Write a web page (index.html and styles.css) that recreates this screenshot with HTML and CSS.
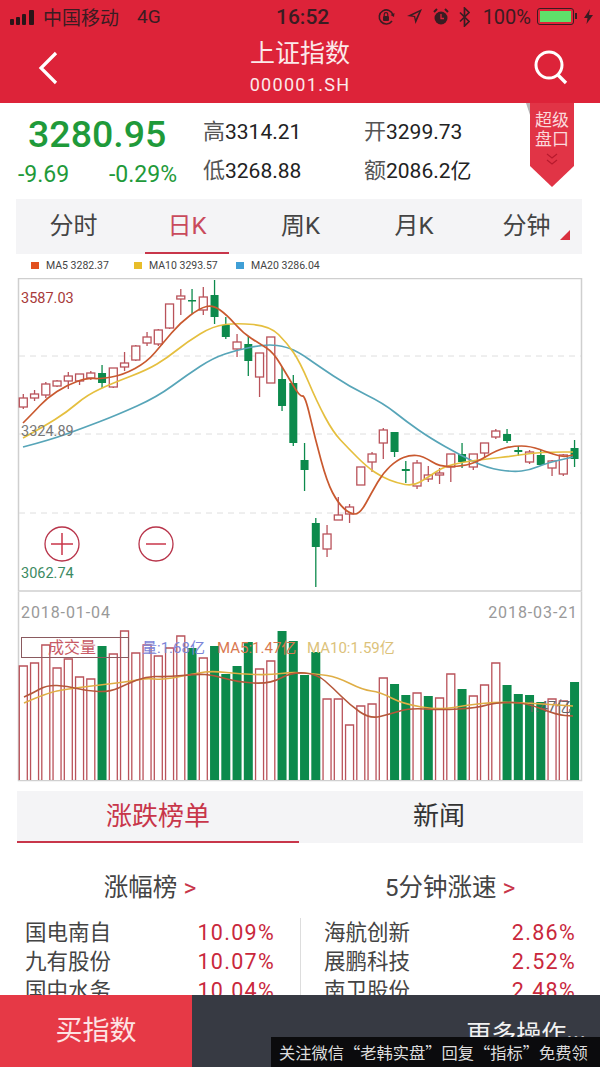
FILE: index.html
```html
<!DOCTYPE html>
<html lang="zh-CN">
<head>
    <meta charset="UTF-8">
    <meta name="viewport" content="width=device-width, initial-scale=1.0">
    <title>上证指数</title>
    <link rel="stylesheet" href="styles.css">
</head>
<body>
    <div class="page">
        <!-- Red header -->
        <header class="top">
            <div class="status">
                <svg class="signal" width="27" height="16" viewBox="0 0 27 16"><rect x="0" y="10" width="4" height="6" rx="1"/><rect x="6" y="8" width="4" height="8" rx="1"/><rect x="12" y="5" width="4" height="11" rx="1"/><rect x="19" y="1" width="5" height="15" rx="1"/></svg>
                <span class="carrier">中国移动</span>
                <span class="net">4G</span>
                <span class="clock">16:52</span>
                <div class="status-right">
                    <svg width="19" height="18" viewBox="0 0 19 18"><path d="M15 13a7 7 0 1 1 1-6" fill="none" stroke="#3a1c22" stroke-width="1.6"/><path d="M17.5 5l-.5 4-3.5-2z" fill="#3a1c22"/><rect x="6" y="8" width="6" height="5" rx="1" fill="#3a1c22"/><path d="M7.2 8V6.500a1.800 1.800 0 0 1 3.600 0V8" fill="none" stroke="#3a1c22" stroke-width="1.200"/></svg>
                    <svg width="17" height="17" viewBox="0 0 17 17"><path d="M16 1L1 8l7 1 1.500 7z M13 4L6 7.600l3.200.500.500 3z" fill="#3a1c22" fill-rule="evenodd"/></svg>
                    <svg width="16" height="18" viewBox="0 0 16 18"><circle cx="8" cy="10" r="6.500" fill="#3a1c22"/><path d="M8 6v4.500h3" fill="none" stroke="#dd2339" stroke-width="1.300"/><path d="M1 4l3-3M15 4l-3-3" stroke="#3a1c22" stroke-width="2"/></svg>
                    <svg width="11" height="20" viewBox="0 0 11 20"><path d="M1 5.500l9 9-4.500 4.500V1l4.500 4.500-9 9" fill="none" stroke="#3a1c22" stroke-width="1.700"/></svg>
                    <span class="pct">100%</span>
                    <span class="battery"><i></i></span>
                    <svg width="9" height="15" viewBox="0 0 9 15"><path d="M6 0L0 9h3.500L2.500 15 9 6H5z" fill="#3a1c22"/></svg>
                </div>
            </div>
            <div class="nav">
                <svg class="back" width="20" height="34" viewBox="0 0 20 34"><path d="M18 2L3 17l15 15" fill="none" stroke="#fff" stroke-width="3.200"/></svg>
                <div class="title">
                    <h1>上证指数</h1>
                    <p>000001.SH</p>
                </div>
                <svg class="search" width="36" height="36" viewBox="0 0 36 36"><circle cx="16" cy="15" r="13" fill="none" stroke="#fff" stroke-width="3"/><path d="M25 25l8 8" stroke="#fff" stroke-width="3.400"/></svg>
            </div>
        </header>

        <!-- Quote summary -->
        <section class="quote">
            <div class="price">
                <div class="now">3280.95</div>
                <div class="change"><span>-9.69</span><span>-0.29%</span></div>
            </div>
            <div class="stats">
                <div><b>高</b>3314.21</div>
                <div><b>开</b>3299.73</div>
                <div><b>低</b>3268.88</div>
                <div><b>额</b>2086.2亿</div>
            </div>
            <div class="ribbon">
                <span>超级<br>盘口</span>
                <svg width="14" height="14" viewBox="0 0 14 14"><path d="M2 1l5 4 5-4M2 7l5 4 5-4" fill="none" stroke="#b81a2d" stroke-width="1.200"/></svg>
            </div>
        </section>

        <nav class="periods">
            <span>分时</span>
            <span class="on">日K</span>
            <span>周K</span>
            <span>月K</span>
            <span class="more">分钟</span>
        </nav>

        <div class="legend">
            <span><i class="c5"></i>MA5 3282.37</span>
            <span><i class="c10"></i>MA10 3293.57</span>
            <span><i class="c20"></i>MA20 3286.04</span>
        </div>

        <!-- Charts, drawn by chart.js -->
        <svg id="kline" class="chart" width="600" height="314" viewBox="0 278 600 314">
            <text class="axis up" x="21" y="303">3587.03</text>
            <text class="axis mid" x="21" y="436">3324.89</text>
            <text class="axis down" x="21" y="578">3062.74</text>
            <g class="zoom-btn">
                <circle cx="62" cy="544" r="17"/>
                <path d="M51 544h22M62 533v22"/>
                <circle cx="156" cy="544" r="17"/>
                <path d="M146 544h20"/>
            </g>
        </svg>
        <svg id="volume" class="chart" width="600" height="190" viewBox="0 592 600 190">
            <text class="date" x="21" y="618">2018-01-04</text>
            <text class="date" x="578" y="618" text-anchor="end">2018-03-21</text>
            <rect class="vol-box" x="21.500" y="637.500" width="107" height="20"/>
            <text class="vol-label" x="48" y="653">成交量</text>
            <text class="vol-text blue" x="142" y="653">量:1.68亿</text>
            <text class="vol-text orange" x="217" y="653">MA5:1.47亿</text>
            <text class="vol-text yellow" x="307" y="653">MA10:1.59亿</text>
            <text class="vol-text gray" x="527" y="712">1.47亿</text>
        </svg>

        <nav class="lists">
            <span class="on">涨跌榜单</span>
            <span>新闻</span>
        </nav>

        <section class="ranks">
            <div class="rank">
                <h3>涨幅榜 <em>&gt;</em></h3>
                <ul>
                    <li><span>国电南自</span><strong>10.09%</strong></li>
                    <li><span>九有股份</span><strong>10.07%</strong></li>
                    <li><span>国中水务</span><strong>10.04%</strong></li>
                </ul>
            </div>
            <div class="rank">
                <h3>5分钟涨速 <em>&gt;</em></h3>
                <ul class="split">
                    <li><span>海航创新</span><strong>2.86%</strong></li>
                    <li><span>展鹏科技</span><strong>2.52%</strong></li>
                    <li><span>南卫股份</span><strong>2.48%</strong></li>
                </ul>
            </div>
        </section>

        <!-- Bottom bar sits over the list -->
        <footer class="actions">
            <div class="buy">买指数</div>
            <div class="others">更多操作<span class="dots">...</span></div>
        </footer>
        <div class="watermark">关注微信“老韩实盘”回复“指标”免费领</div>
    </div>
    <script src="chart.js"></script>
</body>
</html>
```
FILE: styles.css
```css
* {
    margin: 0;
    padding: 0;
    box-sizing: border-box;
}

body {
    background: #fff;
    font-family: Roboto, "Noto Sans CJK SC", sans-serif;
    color: #2b2b2b;
}

.page {
    position: relative;
    width: 600px;
    height: 1067px;
    overflow: hidden;
}

/* header */
.top {
    height: 103px;
    background: #dd2339;
}

.status {
    display: flex;
    align-items: center;
    height: 33px;
    padding: 0 7px 0 10px;
    color: #3a1c22;
    font-size: 19px;
}

.signal { fill: #2a1418; }

.carrier { margin-left: 6px; width: 94px; }

.net { width: 139px; }

.clock {
    font-size: 21px;
    font-weight: 500;
}

.status-right {
    display: flex;
    align-items: center;
    gap: 10px;
    margin-left: auto;
}

.pct { font-size: 20px; margin-left: 3px; }

.battery {
    position: relative;
    display: block;
    width: 37px;
    height: 17px;
    margin-left: -4px;
    padding: 2px;
    border: 1px solid #3a1c22;
    border-radius: 3px;
}

.battery::after {
    content: "";
    position: absolute;
    right: -4px;
    top: 4px;
    width: 2px;
    height: 6px;
    background: #3a1c22;
}

.battery i {
    display: block;
    height: 100%;
    background: #5fe06a;
}

.nav {
    display: grid;
    grid-template-columns: 1fr auto 1fr;
    align-items: center;
    height: 70px;
    padding: 0 31px;
}

.back { margin-left: 7px; }

.search { justify-self: end; }

.title { text-align: center; color: #fbe9ea; }

.title h1 { font-size: 25px; font-weight: 400; line-height: 32px; margin-top: 2px; }

.title p { font-size: 18px; line-height: 30px; letter-spacing: 1.300px; }

/* quote */
.quote {
    position: relative;
    display: flex;
    height: 96px;
    padding: 8px 0 0 18px;
}

.quote::before {
    content: "";
    position: absolute;
    left: 526px;
    top: 0;
    border-top: 12px solid #b9b3b5;
    border-left: 4px solid transparent;
}

.price { width: 185px; }

.now {
    font-size: 37.500px;
    line-height: 46px;
    padding-left: 10px;
    color: #1f9a3a;
    font-weight: 500;
}

.change {
    display: flex;
    justify-content: space-between;
    width: 159px;
    margin-top: 2px;
    font-size: 23px;
    line-height: 31px;
    color: #1f9a3a;
}

.stats {
    display: grid;
    grid-template-columns: 161px 150px;
    grid-auto-rows: 39px;
    align-items: center;
    margin-top: -2px;
    font-size: 21px;
    color: #222;
}

.stats b { font-weight: 400; color: #555; font-size: 22px; }

.ribbon {
    position: absolute;
    top: 0;
    left: 530px;
    width: 44px;
    height: 84px;
    padding-top: 8px;
    text-align: center;
    background: #e13446;
    clip-path: polygon(0 0, 100% 0, 100% 75%, 50% 100%, 0 75%);
    color: #fbd9dc;
    font-size: 17px;
    line-height: 19px;
}

.ribbon svg { display: block; margin: 4px auto 0; }

/* period tabs */
.periods {
    display: grid;
    grid-template-columns: 115px 113px 113px 114px 111px;
    align-items: center;
    width: 566px;
    height: 55px;
    margin-left: 16px;
    background: #f4f4f6;
    font-size: 24px;
    color: #444;
    text-align: center;
}

.periods span { line-height: 55px; height: 55px; }

.periods .on {
    color: #c94a5c;
    border-bottom: 2px solid #c8364a;
    margin: 0 15px 0 14px;
}

.periods .more { position: relative; }

.periods .more::after {
    content: "";
    position: absolute;
    right: 12px;
    bottom: 14px;
    border-left: 10px solid transparent;
    border-bottom: 10px solid #d9303f;
}

.legend {
    display: flex;
    height: 24px;
    padding: 4px 0 0 31px;
    font-size: 10.500px;
    line-height: 16px;
    color: #444;
}

.legend span { width: 103px; }

.legend span + span { width: 102px; }

.legend i {
    display: inline-block;
    width: 8px;
    height: 7px;
    margin-right: 7px;
}

.c5 { background: #e2501f; }
.c10 { background: #e8bd2a; }
.c20 { background: #3f9fd6; }

/* charts */
.chart { display: block; }

.axis { font-size: 14.500px; }
.axis.up { fill: #a83a3a; }
.axis.mid { fill: #777; }
.axis.down { fill: #3c8a62; }

.zoom-btn circle { fill: #fff; stroke: #b8344a; stroke-width: 1.300; }
.zoom-btn path { fill: none; stroke: #c9364a; stroke-width: 1.500; }

.date { font-size: 16px; fill: #999; letter-spacing: 0.9px; }

.vol-box { fill: none; stroke: #8a5a5f; stroke-width: 1; }
.vol-label { font-size: 16px; fill: #c85a66; }
.vol-text { font-size: 15px; }
.vol-text.blue { fill: #7d86d8; }
.vol-text.orange { fill: #d9774f; }
.vol-text.yellow { fill: #dcc27a; }
.vol-text.gray { fill: #666; }

/* lists tabs */
.lists {
    display: grid;
    grid-template-columns: 282px 280px;
    grid-template-rows: 52px;
    width: 566px;
    height: 52px;
    margin: 9px 0 0 17px;
    background: #f4f4f6;
    font-size: 26px;
    line-height: 50px;
    text-align: center;
    color: #333;
}

.lists .on {
    color: #c8364a;
    border-bottom: 2px solid #c8364a;
}

.ranks {
    display: grid;
    grid-template-columns: 300px 300px;
    padding-top: 27px;
}

.rank h3 {
    font-size: 24.500px;
    font-weight: 400;
    line-height: 36px;
    text-align: center;
    color: #444;
}

.rank h3 em {
    font-style: normal;
    color: #c8364a;
}

.rank ul {
    list-style: none;
    margin-top: 12px;
    padding: 0 25px;
    font-size: 21.500px;
}

.rank ul.split {
    border-left: 1px solid #ddd;
    padding-left: 23px;
    padding-right: 24px;
}

.rank li {
    display: flex;
    justify-content: space-between;
    line-height: 29px;
    color: #444;
}

.rank strong {
    font-weight: 400;
    color: #c9283c;
    letter-spacing: 1.300px;
}

/* bottom */
.actions {
    position: absolute;
    left: 0;
    right: 0;
    bottom: 0;
    display: flex;
    height: 72px;
    background: #373a43;
    color: #fff;
    font-size: 27px;
    line-height: 72px;
}

.buy {
    width: 192px;
    background: #e63946;
    text-align: center;
    color: #fde3e3;
}

/* cut off by the caption strip, as on the phone */
.others {
    flex: 1;
    height: 42px;
    overflow: hidden;
    padding-right: 14px;
    text-align: right;
    color: #f2f2f2;
    font-size: 25px;
}

.dots { vertical-align: 4px; }

.watermark {
    position: absolute;
    left: 271px;
    right: 0;
    bottom: 0;
    height: 30px;
    padding-left: 8px;
    background: #0b0b0d;
    color: #ddd;
    font-family: "Noto Sans CJK SC", sans-serif;
    font-size: 16.250px;
    line-height: 30px;
    white-space: nowrap;
    overflow: hidden;
}
```
FILE: chart.js
```js
const NS = 'http://www.w3.org/2000/svg';
const UP = '#b9525a';
const DOWN = '#0c8a4c';

// x of the i-th trading day
const dayX = i => 23.3 + 11.25 * i;

// candles: high, open/close top, open/close bottom, low, 1 = falling day (page y)
const candles = [
    [394, 398, 407, 409, 0], [390, 394, 398, 401, 0], [382, 384, 395, 398, 0], [380, 381, 386, 387, 0],
    [372, 376, 381, 389, 0], [374, 374, 381, 385, 0], [371, 373, 378, 380, 0], [365, 373, 383, 388, 1],
    [368, 368, 387, 388, 0], [352, 363, 367, 371, 0], [345, 346, 360, 361, 0], [332, 337, 343, 346, 0],
    [329, 330, 344, 346, 0], [304, 304, 328, 329, 0], [289, 296, 299, 315, 0], [289, 300, 301, 314, 1],
    [287, 297, 310, 315, 0], [280, 295, 317, 324, 1], [317, 325, 337, 339, 1], [334, 342, 349, 357, 0],
    [336, 344, 361, 376, 1], [353, 353, 377, 397, 0], [337, 337, 383, 383, 0], [367, 379, 406, 411, 1],
    [375, 383, 443, 446, 1], [443, 460, 470, 491, 1], [518, 523, 547, 587, 1], [525, 534, 549, 557, 0],
    [497, 515, 520, 520, 0], [504, 507, 514, 523, 0], [467, 467, 485, 485, 0], [452, 454, 462, 472, 0],
    [428, 430, 443, 459, 0], [432, 432, 452, 457, 1], [461, 469, 471, 483, 1], [460, 463, 486, 489, 0],
    [466, 475, 479, 482, 0], [468, 473, 475, 484, 0], [454, 454, 467, 482, 0], [443, 454, 462, 468, 1],
    [454, 454, 467, 470, 0], [443, 443, 453, 458, 0], [429, 431, 437, 439, 0], [429, 434, 441, 443, 1],
    [446, 450, 452, 456, 1], [450, 452, 462, 464, 0], [450, 455, 465, 466, 1], [460, 461, 468, 476, 0],
    [454, 455, 474, 476, 0], [440, 448, 459, 467, 1]
];

const ma5 = [[23, 423], [33, 413], [47, 398], [67, 385], [87, 378], [100, 379], [123, 375], [147, 362], [163, 343], [180, 323], [200, 308], [213, 305], [227, 315], [243, 333], [260, 344], [273, 352], [287, 375], [300, 397], [305, 395], [315, 438], [327, 482], [338, 503], [350, 514], [360, 514], [372, 492], [383, 473], [397, 460], [410, 455], [423, 456], [440, 467], [463, 466], [477, 462], [497, 450], [513, 446], [530, 446], [550, 453], [563, 457], [573, 455]];
const ma10 = [[23, 438], [43, 427], [67, 412], [87, 395], [113, 383], [147, 370], [167, 358], [187, 342], [213, 326], [237, 323], [270, 326], [287, 343], [300, 362], [317, 402], [333, 432], [348, 448], [367, 467], [382, 477], [397, 483], [413, 486], [427, 478], [443, 467], [463, 462], [487, 459], [513, 456], [533, 453], [553, 452], [573, 452]];
const ma20 = [[23, 447], [50, 440], [83, 428], [117, 415], [157, 397], [187, 375], [213, 358], [237, 350], [267, 344], [287, 347], [300, 353], [317, 365], [350, 387], [383, 403], [407, 422], [430, 438], [460, 455], [487, 468], [513, 472], [530, 470], [547, 463], [573, 457]];

// volume: bar top (page y), 1 = falling day
const volumes = [
    [666, 0], [663, 0], [645, 0], [668, 0], [659, 0], [677, 0], [679, 0], [646, 1], [654, 0], [631, 0],
    [653, 0], [645, 0], [656, 0], [648, 0], [636, 0], [648, 1], [658, 0], [646, 1], [674, 1], [666, 1],
    [642, 1], [669, 0], [661, 0], [631, 1], [641, 1], [675, 1], [652, 1], [699, 0], [699, 0], [725, 0],
    [706, 0], [704, 0], [678, 0], [684, 1], [695, 1], [693, 0], [696, 1], [698, 0], [674, 0], [689, 1],
    [696, 0], [685, 0], [663, 0], [685, 1], [694, 1], [695, 1], [702, 1], [699, 0], [701, 0], [682, 1]
];
const volMa5 = [[24, 697], [33, 693], [47, 685], [67, 686], [87, 691], [110, 692], [127, 684], [147, 676], [167, 677], [197, 674], [213, 675], [237, 682], [270, 684], [292, 672], [317, 674], [333, 688], [350, 705], [370, 719], [390, 714], [410, 708], [440, 710], [477, 708], [497, 702], [527, 703], [557, 715], [573, 716]];
const volMa10 = [[24, 703], [47, 693], [67, 689], [100, 685], [133, 681], [147, 678], [163, 680], [197, 673], [213, 671], [240, 674], [270, 675], [292, 672], [317, 674], [337, 677], [363, 690], [380, 692], [403, 704], [440, 710], [467, 705], [497, 702], [527, 703], [573, 706]];

function add(svg, tag, attrs, before) {
    const el = document.createElementNS(NS, tag);
    for (const k in attrs) el.setAttribute(k, attrs[k]);
    svg.insertBefore(el, before || null);
    return el;
}

// smooth line through the midpoints
function smooth(pts) {
    let d = `M${pts[0][0]} ${pts[0][1]}`;
    for (let i = 1; i < pts.length - 1; i++) {
        const mx = (pts[i][0] + pts[i + 1][0]) / 2;
        const my = (pts[i][1] + pts[i + 1][1]) / 2;
        d += `Q${pts[i][0]} ${pts[i][1]} ${mx} ${my}`;
    }
    const last = pts[pts.length - 1];
    return d + `L${last[0]} ${last[1]}`;
}

const kline = document.getElementById('kline');
const volume = document.getElementById('volume');
const klineFirst = kline.firstElementChild;
const volumeFirst = volume.firstElementChild;

// price chart: frame, grid, candles, averages. Labels stay on top.
add(kline, 'rect', { x: 18.500, y: 278.500, width: 563, height: 312.500, fill: 'none', stroke: '#cfcfcf', 'stroke-width': 1.500 }, klineFirst);
[356, 434, 513].forEach(y => {
    add(kline, 'path', { d: `M19 ${y}H581`, stroke: '#dedede', 'stroke-dasharray': '6 5' }, klineFirst);
});
candles.forEach((c, i) => {
    const x = dayX(i);
    const color = c[4] ? DOWN : UP;
    add(kline, 'path', { d: `M${x} ${c[0]}V${c[3]}`, stroke: color, 'stroke-width': 1.300 }, klineFirst);
    add(kline, 'rect', {
        x: x - 4, y: c[1], width: 8, height: Math.max(c[2] - c[1], 1.500),
        fill: c[4] ? DOWN : '#fff', stroke: color, 'stroke-width': c[4] ? 0 : 1.300
    }, klineFirst);
});
[[ma20, '#57a5b8'], [ma10, '#e5bf3f'], [ma5, '#c9592f']].forEach(([pts, color]) => {
    add(kline, 'path', { d: smooth(pts), fill: 'none', stroke: color, 'stroke-width': 1.700 }, klineFirst);
});

// volume chart
add(volume, 'path', { d: 'M18.500 592V780.500H581.500V592', fill: 'none', stroke: '#d0d0d0', 'stroke-width': 1.500 }, volumeFirst);
volumes.forEach((v, i) => {
    const x = dayX(i);
    if (v[1]) {
        add(volume, 'rect', { x: x - 4.500, y: v[0], width: 9, height: 780 - v[0], fill: DOWN }, volumeFirst);
    } else {
        add(volume, 'path', { d: `M${x - 4} 780V${v[0]}H${x + 4}V780`, fill: '#fff', stroke: UP, 'stroke-width': 1.300 }, volumeFirst);
    }
});
[[volMa10, '#dfae45'], [volMa5, '#b5573a']].forEach(([pts, color]) => {
    add(volume, 'path', { d: smooth(pts), fill: 'none', stroke: color, 'stroke-width': 1.600 });
});
```
